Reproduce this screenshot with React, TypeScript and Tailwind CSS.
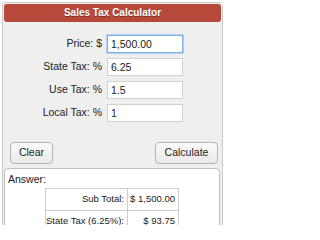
import React from "react";

const fields = [
  { label: "Price: $", value: "1,500.00", focus: true },
  { label: "State Tax: %", value: "6.25" },
  { label: "Use Tax: %", value: "1.5" },
  { label: "Local Tax: %", value: "1" },
];

const App: React.FC = () => {
  return (
    <div className="w-[225px] h-[225px] overflow-hidden bg-white text-[10px] text-[#222] font-['Liberation_Sans',Arial,sans-serif]">
      <div className="ml-[2px] mt-[2px] w-[221px] h-[240px] border border-[#c9c9c9] rounded-[4px] bg-[#efefef] p-[1px]">
        {/* header */}
        <div className="h-[18px] w-[217px] rounded-[3px] bg-[#b6493a] text-center text-white font-bold leading-[18px] text-[10px] [text-shadow:0_1px_0_rgba(0,0,0,0.35)]">
          Sales Tax Calculator
        </div>

        {/* inputs */}
        <div className="mt-[13px] flex flex-col gap-[5px]">
          {fields.map((f) => (
            <div key={f.label} className="flex items-center gap-[5px]">
              <span className="w-[98px] text-right text-[10.5px]">{f.label}</span>
              <input
                readOnly
                value={f.value}
                className={
                  f.focus
                    ? "w-[76px] h-[18px] bg-white px-[3px] text-[10.5px] text-[#222] outline-none border border-[#7eb0e8] ring-1 ring-[#b3d0f2]"
                    : "w-[76px] h-[18px] bg-white px-[3px] text-[10.5px] text-[#222] outline-none border border-[#d2d2d2]"
                }
              />
            </div>
          ))}
        </div>

        {/* buttons */}
        <div className="mt-[20px] flex justify-between pl-[6px] pr-[3px]">
          <button className="w-[43px] h-[22px] rounded-[4px] border border-[#b4b4b4] bg-gradient-to-b from-[#fbfbfb] to-[#e9e9e9] text-[10.5px] text-[#222]">
            Clear
          </button>
          <button className="w-[63px] h-[22px] rounded-[4px] border border-[#b4b4b4] bg-gradient-to-b from-[#fbfbfb] to-[#e9e9e9] text-[10.5px] text-[#222]">
            Calculate
          </button>
        </div>

        {/* answer */}
        <div className="mt-[4px] w-[216px] h-[80px] rounded-[4px] border border-[#bdbdbd] bg-white px-[3px] pt-[4px]">
          <div className="leading-[12px] text-[10.5px]">Answer:</div>
          <table className="mx-auto mt-[3px] w-[133px] table-fixed border-collapse whitespace-nowrap text-[9.5px]">
            <tbody>
              <tr className="h-[22px]">
                <td className="w-[82px] border border-[#cfcfcf] pr-[3px] text-right">Sub Total:</td>
                <td className="w-[51px] border border-[#cfcfcf] pr-[3px] text-right">$ 1,500.00</td>
              </tr>
              <tr className="h-[22px]">
                <td className="border border-[#cfcfcf] pr-[3px] text-right">State Tax (6.25%):</td>
                <td className="border border-[#cfcfcf] pr-[3px] text-right">$ 93.75</td>
              </tr>
            </tbody>
          </table>
        </div>
      </div>
    </div>
  );
};

export default App;
